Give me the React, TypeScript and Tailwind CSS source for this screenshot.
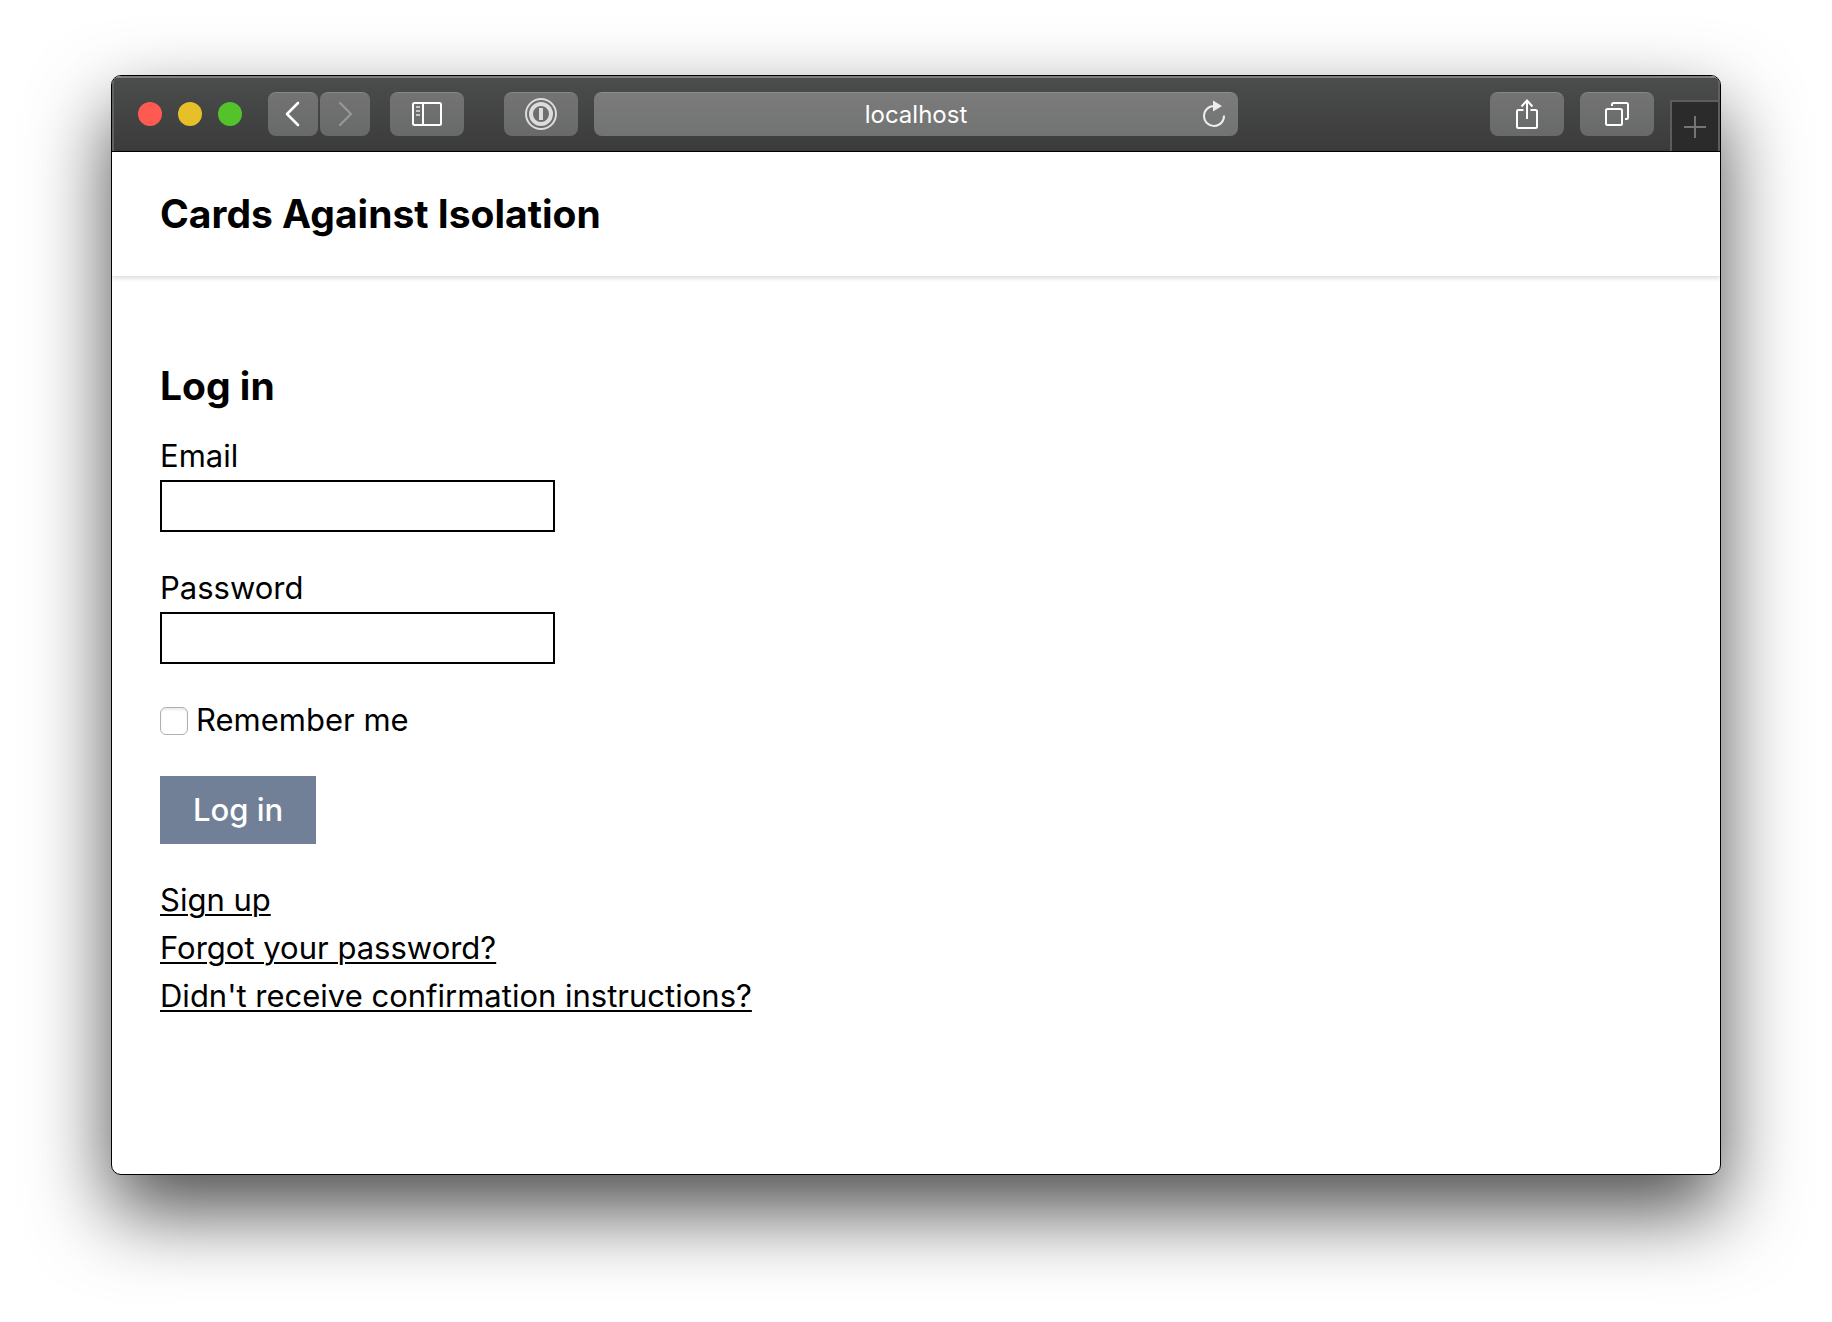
import type { ReactNode } from "react";

function ToolbarButton({ label, wide = false, children }: { label: string; wide?: boolean; children: ReactNode }) {
  return (
    <button
      type="button"
      aria-label={label}
      className={
        "flex h-11 shrink-0 items-center justify-center rounded-lg border-t border-[#858685] bg-linear-to-b from-[#727372] to-[#686a69] " +
        (wide ? "w-[74px]" : "w-[50px]")
      }
    >
      {children}
    </button>
  );
}

function BackIcon() {
  return (
    <svg width="16" height="26" viewBox="0 0 16 26" fill="none" stroke="#fff" strokeWidth="2.6" strokeLinecap="round" strokeLinejoin="round">
      <path d="M13 2 2 13l11 11" />
    </svg>
  );
}

function ForwardIcon() {
  return (
    <svg width="16" height="26" viewBox="0 0 16 26" fill="none" stroke="#969796" strokeWidth="2.4" strokeLinecap="round" strokeLinejoin="round">
      <path d="M3 2l11 11L3 24" />
    </svg>
  );
}

function SidebarIcon() {
  return (
    <svg width="30" height="24" viewBox="0 0 30 24" fill="none" stroke="#fff" strokeWidth="2">
      <rect x="1" y="1" width="28" height="22" rx="1.5" />
      <path d="M11 1v22" />
      <path d="M4 5h4M4 9h4M4 13h4" stroke="#c4c5c4" />
    </svg>
  );
}

function OnePasswordIcon() {
  return (
    <svg width="32" height="32" viewBox="0 0 32 32" fill="none" stroke="#dcdcdc">
      <circle cx="16" cy="16" r="15" strokeWidth="2" />
      <circle cx="16" cy="16" r="10" strokeWidth="4" />
      <path d="M16 10v12" strokeWidth="4" />
    </svg>
  );
}

function ReloadIcon() {
  return (
    <svg width="24" height="28" viewBox="0 0 24 28" fill="none">
      <path d="M22 15.5A10 10 0 1 1 12 6" stroke="#ececec" strokeWidth="2" />
      <path d="M11 .5v11L20 6z" fill="#ececec" />
    </svg>
  );
}

function ShareIcon() {
  return (
    <svg width="22" height="30" viewBox="0 0 22 30" fill="none" stroke="#fff" strokeWidth="2">
      <path d="M7.5 11h-5A1.5 1.5 0 0 0 1 12.5v15A1.5 1.5 0 0 0 2.5 29h17a1.5 1.5 0 0 0 1.5-1.500v-15A1.500 1.500 0 0 0 19.500 11h-5" />
      <path d="M11 20V1.500M5.500 7.500 11 1.500l5.500 6" />
    </svg>
  );
}

function TabsIcon() {
  return (
    <svg width="24" height="24" viewBox="0 0 24 24" fill="none" stroke="#fff" strokeWidth="2">
      <rect x="1" y="7" width="16" height="16" rx="1.5" />
      <path d="M7 4V2.500A1.500 1.500 0 0 1 8.500 1h13A1.500 1.500 0 0 1 23 2.500v13A1.500 1.500 0 0 1 21.500 17H20" />
    </svg>
  );
}

function PlusIcon() {
  return (
    <svg width="22" height="22" viewBox="0 0 22 22" fill="none" stroke="#747574" strokeWidth="2">
      <path d="M11 0v22M0 11h22" />
    </svg>
  );
}

function Toolbar() {
  return (
    <div className="grid h-[76px] grid-cols-[1fr_40%_1fr] border-t-2 border-b border-t-[#7d7e7d] border-b-black bg-linear-to-b from-[#4b4d4c] to-[#3a3b3a] shadow-[inset_2px_0_#5f605f,inset_-2px_0_#5f605f]">
      <div className="flex items-center justify-between pr-4 pb-0.5 pl-[26px]">
        <div className="flex items-center">
          <div className="flex gap-4">
            <span className="size-6 rounded-full bg-[#ff5a52]" />
            <span className="size-6 rounded-full bg-[#e6c029]" />
            <span className="size-6 rounded-full bg-[#53c22b]" />
          </div>
          <div className="ml-[26px] flex gap-0.5">
            <ToolbarButton label="Back">
              <BackIcon />
            </ToolbarButton>
            <ToolbarButton label="Forward">
              <ForwardIcon />
            </ToolbarButton>
          </div>
          <div className="ml-5">
            <ToolbarButton label="Show sidebar" wide>
              <SidebarIcon />
            </ToolbarButton>
          </div>
        </div>
        <ToolbarButton label="1Password" wide>
          <OnePasswordIcon />
        </ToolbarButton>
      </div>

      <div className="flex items-center pb-0.5">
        <div className="grid h-11 w-full grid-cols-[1fr_auto_1fr] items-center rounded-lg border-t border-[#8c8d8c] bg-linear-to-b from-[#7a7b7a] to-[#727473] px-3">
          <span className="col-start-2 pt-0.5 text-2xl text-white">localhost</span>
          <button type="button" aria-label="Reload" className="justify-self-end">
            <ReloadIcon />
          </button>
        </div>
      </div>

      <div className="flex items-center justify-end gap-4">
        <div className="flex gap-4 pb-0.5">
          <ToolbarButton label="Share" wide>
            <ShareIcon />
          </ToolbarButton>
          <ToolbarButton label="Show all tabs" wide>
            <TabsIcon />
          </ToolbarButton>
        </div>
        <button
          type="button"
          aria-label="New tab"
          className="flex h-[51px] w-[50px] items-center justify-center self-end border-t-2 border-r-2 border-l-2 border-[#5c5d5c] bg-[#2a2b2a]"
        >
          <PlusIcon />
        </button>
      </div>
    </div>
  );
}

function Field({ id, label, type }: { id: string; label: string; type: string }) {
  return (
    <div className="flex flex-col items-start">
      <label htmlFor={id}>{label}</label>
      <input id={id} type={type} className="h-[52px] w-[395px] max-w-full border-2 border-black bg-white px-2 text-2xl outline-none" />
    </div>
  );
}

const links = ["Sign up", "Forgot your password?", "Didn't receive confirmation instructions?"];

export default function App() {
  return (
    <div className="flex min-h-screen bg-white px-[111px] pt-[75px] pb-[147px] font-['Inter',sans-serif] text-black">
      <div className="flex min-w-0 flex-1 flex-col overflow-hidden rounded-[10px] border border-black bg-white shadow-[0_36px_80px_rgba(0,0,0,0.7)]">
        <Toolbar />
        <header className="px-12 py-8 shadow-[0_2px_6px_rgba(0,0,0,0.1),0_2px_4px_rgba(0,0,0,0.06)]">
          <h1 className="text-[39px] leading-[60px] font-bold">Cards Against Isolation</h1>
        </header>
        <main className="px-12 pt-20 pb-12 text-[31px] leading-[48px]">
          <h2 className="text-[39px] leading-[60px] font-bold">Log in</h2>
          <form className="mt-4 flex flex-col items-start gap-8" onSubmit={(event) => event.preventDefault()}>
            <Field id="email" label="Email" type="email" />
            <Field id="password" label="Password" type="password" />
            <div className="flex items-center gap-2">
              <input
                id="remember"
                type="checkbox"
                className="mt-0.5 size-7 appearance-none rounded-md border border-[#b0b0b0] bg-white shadow-[inset_0_2px_2px_rgba(0,0,0,0.08)] checked:bg-[#718096]"
              />
              <label htmlFor="remember">Remember me</label>
            </div>
            <button type="submit" className="h-[68px] bg-[#718096] px-[33px] font-medium text-white">
              Log in
            </button>
          </form>
          <ul className="mt-8">
            {links.map((text) => (
              <li key={text}>
                <a href="#" className="underline decoration-2 underline-offset-[3px]">
                  {text}
                </a>
              </li>
            ))}
          </ul>
        </main>
      </div>
    </div>
  );
}
